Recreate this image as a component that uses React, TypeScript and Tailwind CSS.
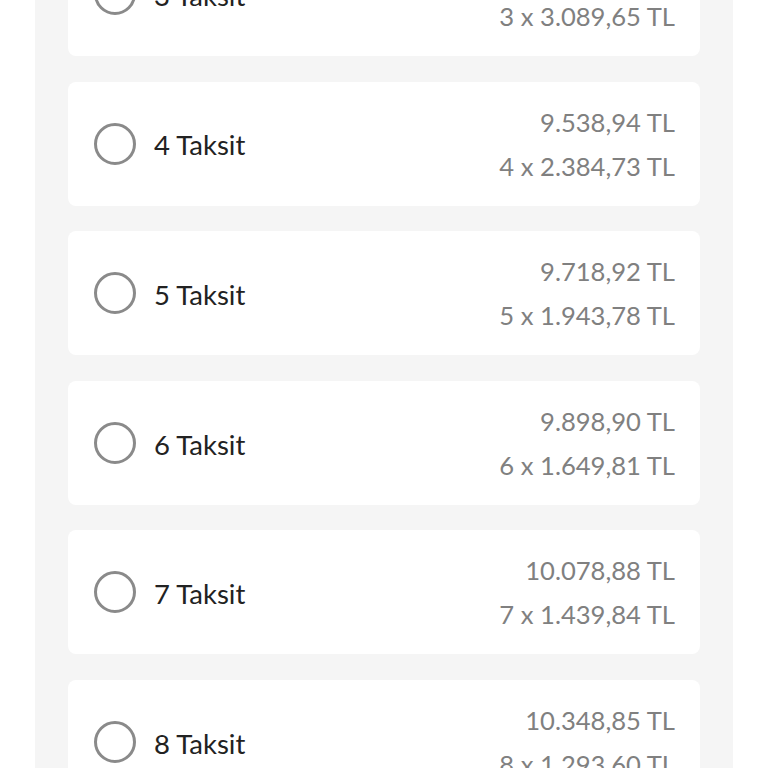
import React from "react";

const rows = [
  { n: 3, total: "9.268,95 TL", per: "3 x 3.089,65 TL" },
  { n: 4, total: "9.538,94 TL", per: "4 x 2.384,73 TL" },
  { n: 5, total: "9.718,92 TL", per: "5 x 1.943,78 TL" },
  { n: 6, total: "9.898,90 TL", per: "6 x 1.649,81 TL" },
  { n: 7, total: "10.078,88 TL", per: "7 x 1.439,84 TL" },
  { n: 8, total: "10.348,85 TL", per: "8 x 1.293,60 TL" },
];

export default function App() {
  return (
    <div className="w-[768px] h-[768px] overflow-hidden bg-white" style={{ fontFamily: "Lato, 'Noto Sans', sans-serif" }}>
      <div className="mx-[35px] h-full bg-[#f5f5f5] px-[33px] flex flex-col overflow-hidden">
        <div className="flex flex-col gap-[25.6px] -mt-[68px]">
          {rows.map((r) => (
            <div key={r.n} className="h-[124px] shrink-0 rounded-[8px] bg-white flex items-center justify-between pl-[26px] pr-[25px]">
              <div className="flex items-center gap-[18px]">
                <div className="w-[42px] h-[42px] rounded-full border-[3px] border-[#8a8a8a]" />
                <span className="text-[27.5px] text-[#222222] leading-none pt-[3px]">{r.n} Taksit</span>
              </div>
              <div className="flex flex-col items-end text-[25.6px] text-[#808080] leading-[44px]">
                <span>{r.total}</span>
                <span>{r.per}</span>
              </div>
            </div>
          ))}
        </div>
      </div>
    </div>
  );
}
